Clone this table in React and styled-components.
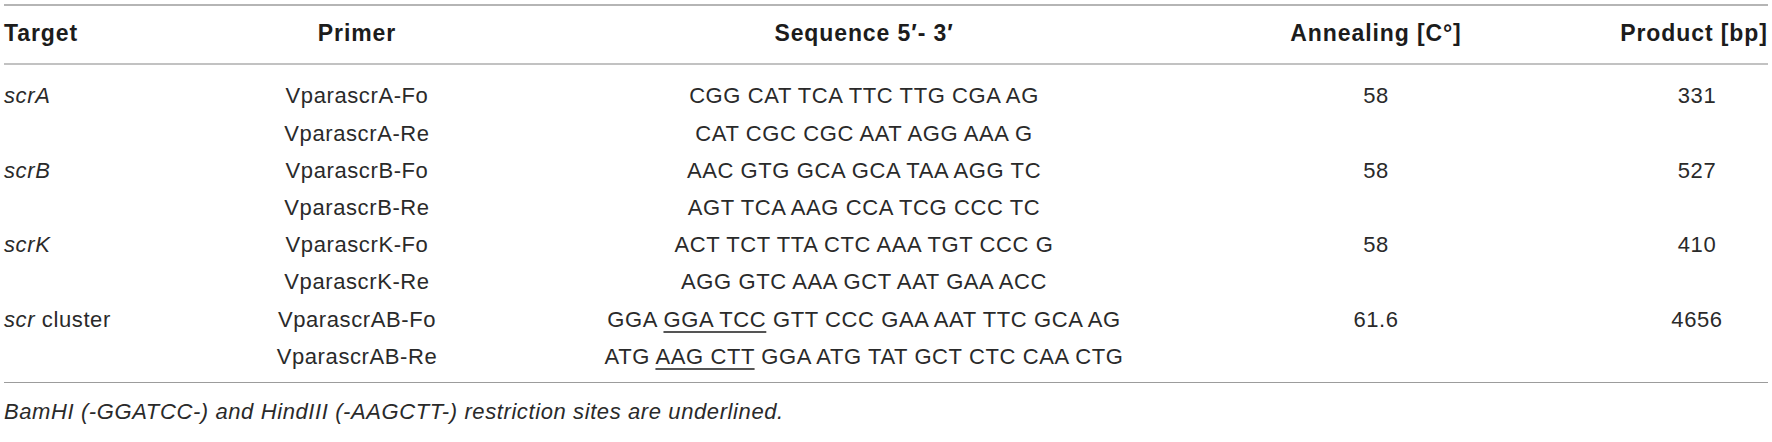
import React from "react";
import styled, { createGlobalStyle } from "styled-components";

const Global = createGlobalStyle`
  html, body { margin: 0; padding: 0; background: #ffffff; }
  body { font-family: "Liberation Sans", Arial, Helvetica, sans-serif; color: #262626; }
`;

const Page = styled.div`
  padding: 4px 4px 0 4px;
  width: 1764px;
`;

const Table = styled.div`
  border-top: 2px solid #b5b5b5;
  border-bottom: 1px solid #9c9c9c;
`;

const Row = styled.div`
  display: grid;
  grid-template-columns: 176px 354px 660px 364px 1fr;
  height: ${(p) => (p.$head ? "57px" : "37.2px")};
  line-height: ${(p) => (p.$head ? "54px" : "37.2px")};
  font-size: ${(p) => (p.$head ? "23px" : "22px")};
  letter-spacing: ${(p) => (p.$head ? "0.9px" : "0.6px")};
  font-weight: ${(p) => (p.$head ? 700 : 400)};
  color: ${(p) => (p.$head ? "#1c1c1c" : "#2a2a2a")};
  white-space: nowrap;
`;

const Head = styled.div`
  border-bottom: 2px solid #c2c2c2;
`;

const Body = styled.div`
  padding: 12.4px 0 7px 0;
`;

const Cell = styled.div`
  text-align: ${(p) => p.$align || "center"};
  padding-left: ${(p) => p.$pl || "0"};
`;

const Gene = styled.i`
  font-style: italic;
`;

const Site = styled.span`
  text-decoration: underline;
  text-decoration-color: #555;
  text-decoration-thickness: 1.5px;
  text-underline-offset: 4px;
`;

const Note = styled.p`
  margin: 16px 0 0 0;
  font-size: 22px;
  letter-spacing: 0.6px;
  font-style: italic;
  color: #2a2a2a;
  line-height: 25px;
  white-space: nowrap;
`;

const rows = [
  { target: <Gene>scrA</Gene>, primer: "VparascrA-Fo", seq: "CGG CAT TCA TTC TTG CGA AG", ann: "58", prod: "331" },
  { target: "", primer: "VparascrA-Re", seq: "CAT CGC CGC AAT AGG AAA G", ann: "", prod: "" },
  { target: <Gene>scrB</Gene>, primer: "VparascrB-Fo", seq: "AAC GTG GCA GCA TAA AGG TC", ann: "58", prod: "527" },
  { target: "", primer: "VparascrB-Re", seq: "AGT TCA AAG CCA TCG CCC TC", ann: "", prod: "" },
  { target: <Gene>scrK</Gene>, primer: "VparascrK-Fo", seq: "ACT TCT TTA CTC AAA TGT CCC G", ann: "58", prod: "410" },
  { target: "", primer: "VparascrK-Re", seq: "AGG GTC AAA GCT AAT GAA ACC", ann: "", prod: "" },
  {
    target: (
      <>
        <Gene>scr</Gene> cluster
      </>
    ),
    primer: "VparascrAB-Fo",
    seq: (
      <>
        GGA <Site>GGA TCC</Site> GTT CCC GAA AAT TTC GCA AG
      </>
    ),
    ann: "61.6",
    prod: "4656",
  },
  {
    target: "",
    primer: "VparascrAB-Re",
    seq: (
      <>
        ATG <Site>AAG CTT</Site> GGA ATG TAT GCT CTC CAA CTG
      </>
    ),
    ann: "",
    prod: "",
  },
];

export default function App() {
  return (
    <Page>
      <Global />
      <Table>
        <Head>
          <Row $head>
            <Cell $align="left">Target</Cell>
            <Cell>Primer</Cell>
            <Cell>Sequence 5′- 3′</Cell>
            <Cell>Annealing [C°]</Cell>
            <Cell $pl="62px">Product [bp]</Cell>
          </Row>
        </Head>
        <Body>
          {rows.map((r, i) => (
            <Row key={i}>
              <Cell $align="left">{r.target}</Cell>
              <Cell>{r.primer}</Cell>
              <Cell>{r.seq}</Cell>
              <Cell>{r.ann}</Cell>
              <Cell $pl="68px">{r.prod}</Cell>
            </Row>
          ))}
        </Body>
      </Table>
      <Note>BamHI (-GGATCC-) and HindIII (-AAGCTT-) restriction sites are underlined.</Note>
    </Page>
  );
}
